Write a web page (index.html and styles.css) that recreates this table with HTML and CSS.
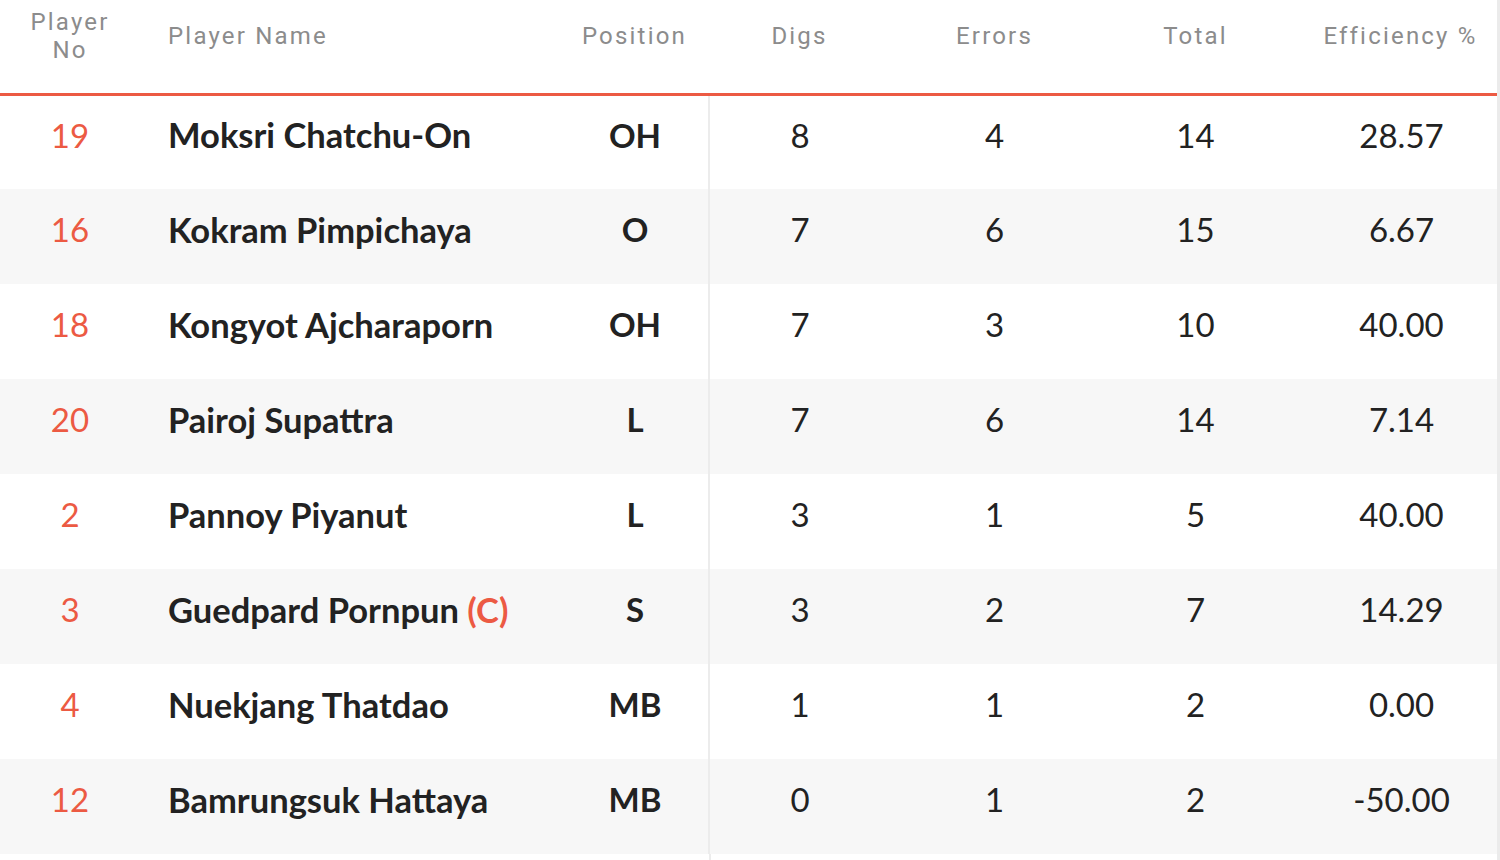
FILE: index.html
```html
<!DOCTYPE html>
<html>
<head>
<meta charset="utf-8">
<link rel="stylesheet" href="styles.css">
</head>
<body>
<div class="page">
  <table class="stats">
    <colgroup>
      <col class="c-no"><col class="c-name"><col class="c-pos"><col class="c-digs"><col class="c-err"><col class="c-tot"><col class="c-eff">
    </colgroup>
    <thead>
      <tr>
        <th class="no">Player<br>No</th>
        <th class="name">Player Name</th>
        <th>Position</th>
        <th>Digs</th>
        <th>Errors</th>
        <th>Total</th>
        <th class="eff">Efficiency %</th>
      </tr>
    </thead>
    <tbody>
      <tr><td class="no">19</td><td class="name">Moksri Chatchu-On</td><td class="pos">OH</td><td class="digs">8</td><td>4</td><td>14</td><td class="eff">28.57</td></tr>
      <tr><td class="no">16</td><td class="name">Kokram Pimpichaya</td><td class="pos">O</td><td class="digs">7</td><td>6</td><td>15</td><td class="eff">6.67</td></tr>
      <tr><td class="no">18</td><td class="name">Kongyot Ajcharaporn</td><td class="pos">OH</td><td class="digs">7</td><td>3</td><td>10</td><td class="eff">40.00</td></tr>
      <tr><td class="no">20</td><td class="name">Pairoj Supattra</td><td class="pos">L</td><td class="digs">7</td><td>6</td><td>14</td><td class="eff">7.14</td></tr>
      <tr><td class="no">2</td><td class="name">Pannoy Piyanut</td><td class="pos">L</td><td class="digs">3</td><td>1</td><td>5</td><td class="eff">40.00</td></tr>
      <tr><td class="no">3</td><td class="name">Guedpard Pornpun <span class="cap">(C)</span></td><td class="pos">S</td><td class="digs">3</td><td>2</td><td>7</td><td class="eff">14.29</td></tr>
      <tr><td class="no">4</td><td class="name">Nuekjang Thatdao</td><td class="pos">MB</td><td class="digs">1</td><td>1</td><td>2</td><td class="eff">0.00</td></tr>
      <tr><td class="no">12</td><td class="name">Bamrungsuk Hattaya</td><td class="pos">MB</td><td class="digs">0</td><td>1</td><td>2</td><td class="eff">-50.00</td></tr>
    </tbody>
  </table>
  <div class="filler"></div>
</div>
</body>
</html>
```

FILE: styles.css
```css
html, body {
  margin: 0;
  padding: 0;
  background: #ffffff;
}
body {
  font-family: "Lato", "Liberation Sans", sans-serif;
  color: #222222;
  overflow: hidden;
}
.page {
  width: 1497px;
  height: 860px;
  border-right: 3px solid #ebebeb;
  display: flex;
  flex-direction: column;
}
.stats {
  width: 1497px;
  border-collapse: collapse;
  table-layout: fixed;
}
.c-no { width: 140px; }
.c-name { width: 420px; }
.c-pos { width: 149px; }
.c-digs { width: 181px; }
.c-err { width: 209px; }
.c-tot { width: 193px; }
.c-eff { width: 205px; }

.stats thead th {
  height: 94px;
  padding: 0 0 20px 0;
  box-sizing: border-box;
  font-family: "Roboto", "Liberation Sans", sans-serif;
  font-weight: 400;
  font-size: 24px;
  letter-spacing: 2.2px;
  color: #8c8c8c;
  text-align: center;
  vertical-align: middle;
  border-bottom: 3px solid #ec5a43;
}
.stats thead th.no {
  line-height: 28px;
  padding-bottom: 20px;
}
.stats thead th.name {
  text-align: left;
  padding-left: 28px;
}
.stats thead th.eff {
  padding-left: 12px;
}
.stats tbody tr {
  height: 95px;
}
.stats tbody tr:nth-child(even) {
  background: #f7f7f7;
}
.stats tbody td {
  padding: 0 0 15px 0;
  text-align: center;
  vertical-align: middle;
  font-size: 33px;
  font-weight: 400;
  color: #222222;
}
.stats tbody td.no {
  color: #ec5a43;
}
.stats tbody td.name {
  text-align: left;
  padding-left: 28px;
  font-weight: 700;
  font-size: 34.5px;
}
.stats tbody td.pos {
  font-weight: 700;
  font-size: 33px;
  padding-left: 2px;
}
.stats tbody td.digs {
  border-left: 2px solid #ececec;
}
.stats tbody td.eff {
  padding-left: 14px;
}
.cap {
  color: #ec5a43;
}
.filler {
  flex: 1;
  margin-left: 709px;
  border-left: 2px solid #ececec;
}
```
